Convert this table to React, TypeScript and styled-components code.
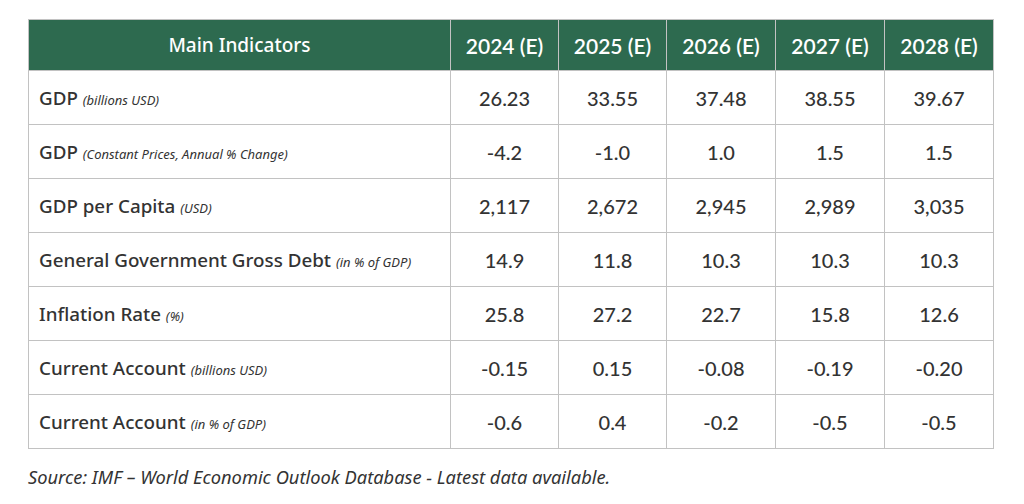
import React from "react";
import styled, { createGlobalStyle } from "styled-components";

const Global = createGlobalStyle`
  html, body { margin: 0; padding: 0; background: #ffffff; }
  body { font-family: "Noto Sans", "Open Sans", sans-serif; color: #333333; }
`;

const Page = styled.div`
  padding: 19px 31px 0 28px;
`;

const Table = styled.table`
  width: 965px;
  border-collapse: collapse;
  table-layout: fixed;
`;

const Col = styled.col<{ $w: number }>`
  width: ${(p) => p.$w}px;
`;

const HeadCell = styled.th<{ $main?: boolean }>`
  height: 50px;
  padding: 0;
  background: #2d6a4f;
  color: #ffffff;
  border: 1.5px solid #c2c2c2;
  text-align: center;
  font-weight: ${(p) => (p.$main ? 500 : 600)};
  font-size: ${(p) => (p.$main ? "19px" : "21px")};
  font-family: ${(p) => (p.$main ? '"Noto Sans", sans-serif' : 'Lato, "Open Sans", sans-serif')};
`;

const Row = styled.tr`
  height: 54px;
`;

const LabelCell = styled.td`
  padding: 0 0 0 10px;
  border: 1.5px solid #c2c2c2;
  font-family: "Noto Sans", sans-serif;
  font-size: 18.8px;
  font-weight: 500;
  color: #333333;
  white-space: nowrap;
`;

const Unit = styled.span`
  font-size: 13px;
  font-style: italic;
  font-weight: 400;
`;

const NumCell = styled.td`
  padding: 0;
  border: 1.5px solid #c2c2c2;
  text-align: center;
  font-family: Lato, "Open Sans", sans-serif;
  font-size: 20px;
  font-weight: 500;
  color: #333333;
`;

const Source = styled.p`
  margin: 16px 0 0 0;
  font-family: "Noto Sans", sans-serif;
  font-style: italic;
  font-size: 18.3px;
  line-height: 24px;
  color: #333333;
`;

const years = ["2024 (E)", "2025 (E)", "2026 (E)", "2027 (E)", "2028 (E)"];
const widths = [422, 108, 108, 109, 109, 109];

const rows: { label: string; unit: string; values: string[] }[] = [
  { label: "GDP", unit: "(billions USD)", values: ["26.23", "33.55", "37.48", "38.55", "39.67"] },
  { label: "GDP", unit: "(Constant Prices, Annual % Change)", values: ["-4.2", "-1.0", "1.0", "1.5", "1.5"] },
  { label: "GDP per Capita", unit: "(USD)", values: ["2,117", "2,672", "2,945", "2,989", "3,035"] },
  { label: "General Government Gross Debt", unit: "(in % of GDP)", values: ["14.9", "11.8", "10.3", "10.3", "10.3"] },
  { label: "Inflation Rate", unit: "(%)", values: ["25.8", "27.2", "22.7", "15.8", "12.6"] },
  { label: "Current Account", unit: "(billions USD)", values: ["-0.15", "0.15", "-0.08", "-0.19", "-0.20"] },
  { label: "Current Account", unit: "(in % of GDP)", values: ["-0.6", "0.4", "-0.2", "-0.5", "-0.5"] },
];

export default function App() {
  return (
    <Page>
      <Global />
      <Table>
        <colgroup>
          {widths.map((w, i) => (
            <Col key={i} $w={w} />
          ))}
        </colgroup>
        <thead>
          <tr>
            <HeadCell $main>Main Indicators</HeadCell>
            {years.map((y) => (
              <HeadCell key={y}>{y}</HeadCell>
            ))}
          </tr>
        </thead>
        <tbody>
          {rows.map((r, i) => (
            <Row key={i}>
              <LabelCell>
                {r.label} <Unit>{r.unit}</Unit>
              </LabelCell>
              {r.values.map((v, j) => (
                <NumCell key={j}>{v}</NumCell>
              ))}
            </Row>
          ))}
        </tbody>
      </Table>
      <Source>Source: IMF – World Economic Outlook Database - Latest data available.</Source>
    </Page>
  );
}
